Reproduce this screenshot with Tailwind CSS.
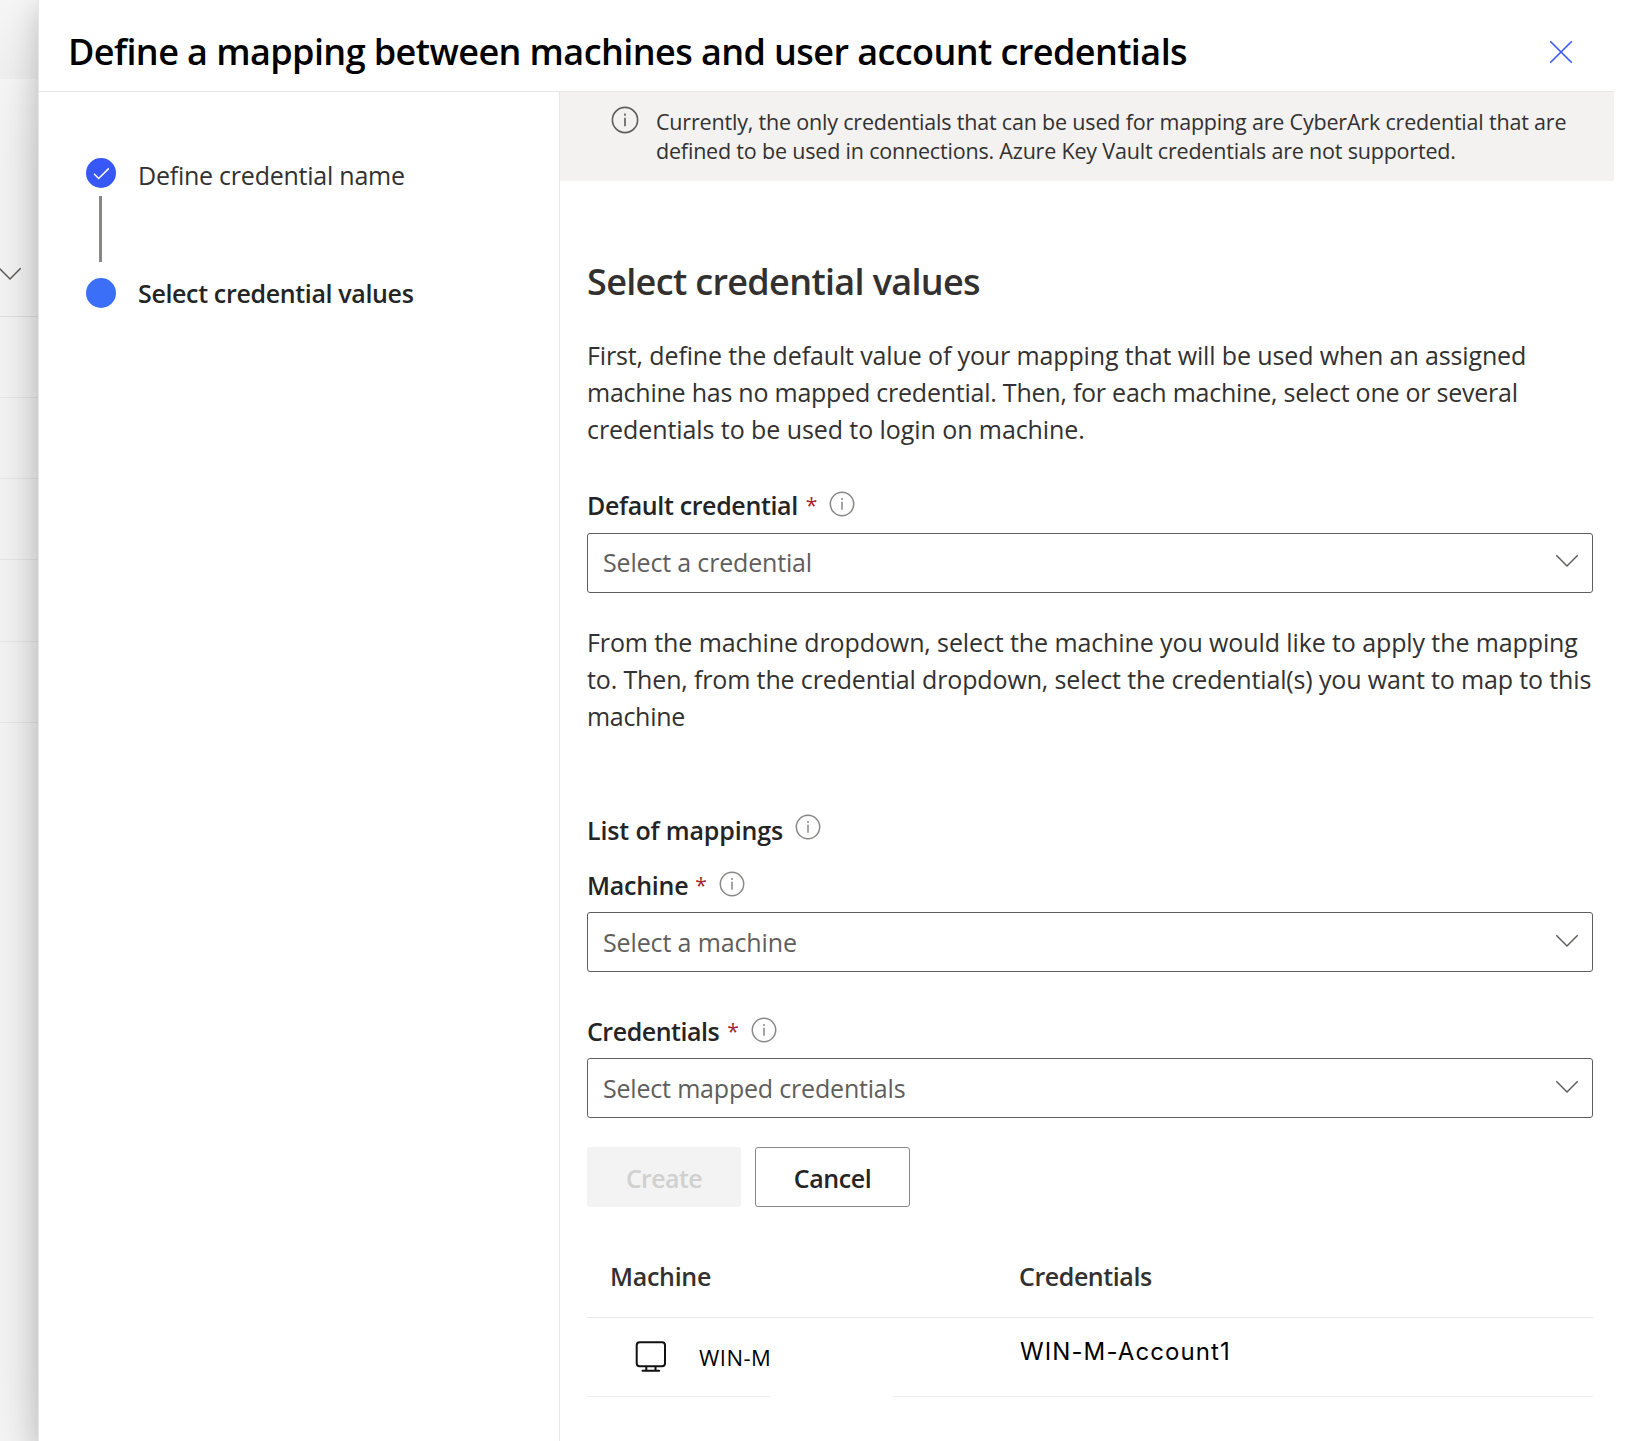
<!DOCTYPE html>
<html lang="en">
<head>
<meta charset="utf-8">
<title>Define a mapping</title>
<script src="https://cdn.jsdelivr.net/npm/@tailwindcss/browser@4"></script>
</head>
<body class="w-[1636px] h-[1441px] overflow-hidden bg-white font-['Open_Sans',sans-serif] text-[25px] leading-[37px] text-[#323130] whitespace-nowrap">
<svg class="hidden">
  <symbol id="info" viewBox="0 0 26 26"><circle cx="13" cy="13" r="11.7" fill="none" stroke="currentColor" stroke-width="1.5"/><path d="M13 10.8v8M13 7v2" stroke="currentColor" stroke-width="1.5" fill="none"/></symbol>
  <symbol id="chev" viewBox="0 0 24 14"><path d="M1.3 1.3 12 12 22.7 1.3" fill="none" stroke="currentColor" stroke-width="1.5"/></symbol>
</svg>
<div class="flex h-[1441px] overflow-hidden">
  <!-- Page behind the panel -->
  <aside class="w-[38px] shrink-0 flex flex-col bg-white">
    <div class="h-[79px] bg-[#f8f8f8]"></div>
    <div class="h-[238px] border-b border-[#ebebeb] pt-[188px]"><svg class="w-6 h-[14px] -ml-[2px] text-[#605e5c]"><use href="#chev"/></svg></div>
    <div class="h-[81px] border-b border-[#f3f2f1]"></div>
    <div class="h-[81px] border-b border-[#f3f2f1]"></div>
    <div class="h-[81px] border-b border-[#f3f2f1]"></div>
    <div class="h-[82px] border-b border-[#f3f2f1]"></div>
    <div class="h-[81px] border-b border-[#f3f2f1]"></div>
  </aside>
  <main class="relative w-[1598px] h-full shrink-0 border-l border-[#e6e6e6] bg-white flex flex-col shadow-[0_47px_107px_rgba(0,0,0,0.22),0_9px_27px_rgba(0,0,0,0.18)]">
    <header class="w-[1575px] h-[92px] shrink-0 border-b border-[#e6e6e6] flex justify-between pl-[29px] pr-[41px]">
      <h1 class="pt-[28px] text-[36px] leading-[48px] font-semibold text-black tracking-[-0.58px]">Define a mapping between machines and user account credentials</h1>
      <svg class="w-6 h-6 mt-10" viewBox="0 0 24 24"><path d="M1.2 1.2 22.8 22.8M22.8 1.2 1.2 22.8" stroke="#3757f7" stroke-width="1.6"/></svg>
    </header>
    <div class="flex grow w-[1575px]">
      <nav class="w-[521px] shrink-0 border-r border-[#e6e6e6] pl-[47px] pt-[66px]">
        <div class="flex items-start gap-[22px]">
          <div class="w-[30px] flex flex-col items-center">
            <svg class="w-[30px] h-[30px]" viewBox="0 0 30 30"><circle cx="15" cy="15" r="15" fill="#3757f7"/><path d="M8 15.8 12.7 20.5 22.8 10.4" fill="none" stroke="#fff" stroke-width="1.5"/></svg>
            <div class="w-[3px] h-[66px] mt-2 mb-4 mr-px bg-[#8a8886]"></div>
            <div class="w-[30px] h-[30px] rounded-full bg-[#3b6ff8]"></div>
          </div>
          <div class="-mt-px flex flex-col gap-[81px]">
            <span class="tracking-[-0.235px]">Define credential name</span>
            <span class="font-semibold text-[#242424] tracking-[-0.35px]">Select credential values</span>
          </div>
        </div>
      </nav>
      <section class="w-[1054px] shrink-0">
        <div class="h-[89px] bg-[#f3f2f1] flex pl-[51px] pt-[14px] text-[21.5px] leading-[29.3px]">
          <svg class="w-7 h-7 text-[#605e5c] mr-[17px]"><use href="#info"/></svg>
          <p class="pt-px tracking-[-0.19px]">Currently, the only credentials that can be used for mapping are CyberArk credential that are<br>defined to be used in connections. Azure Key Vault credentials are not supported.</p>
        </div>
        <div class="pl-[27px] w-[1033px] pt-[76px]">
          <h2 class="text-[36px] leading-[50px] font-semibold tracking-[-0.66px]">Select credential values</h2>
          <p class="mt-[30px] leading-[37.2px]"><span class="tracking-[-0.13px]">First, define the default value of your mapping that will be used when an assigned</span><br><span class="tracking-[-0.235px]">machine has no mapped credential. Then, for each machine, select one or several</span><br><span class="tracking-[-0.075px]">credentials to be used to login on machine.</span></p>
          <div class="mt-[38px] flex h-[37px] font-semibold text-[#242424]"><span class="tracking-[-0.36px]">Default credential</span><span class="ml-2 text-[21px] font-normal text-[#a4262c]">*</span><svg class="ml-3 mt-1 w-[26px] h-[26px] text-[#8a8886]"><use href="#info"/></svg></div>
          <div class="mt-[9px] h-[60px] rounded-[3px] border border-[#605e5c] flex items-center justify-between pl-[15px] pr-[13px] text-[#605e5c]"><span class="tracking-[-0.17px]">Select a credential</span><svg class="w-6 h-[14px] -mt-[3px]"><use href="#chev"/></svg></div>
          <p class="mt-[31px] leading-[37.2px]"><span class="tracking-[-0.105px]">From the machine dropdown, select the machine you would like to apply the mapping</span><br><span class="tracking-[-0.142px]">to. Then, from the credential dropdown, select the credential(s) you want to map to this</span><br><span class="tracking-[-0.3px]">machine</span></p>
          <div class="mt-[76px] flex h-[37px] font-semibold text-[#242424]"><span class="pt-px tracking-[-0.14px]">List of mappings</span><svg class="ml-[12px] mt-[3px] w-[26px] h-[26px] text-[#8a8886]"><use href="#info"/></svg></div>
          <div class="mt-[19px] flex h-[37px] font-semibold text-[#242424]"><span class="tracking-[-0.25px]">Machine</span><span class="ml-[7px] text-[21px] font-normal text-[#a4262c]">*</span><svg class="ml-3 mt-1 w-[26px] h-[26px] text-[#8a8886]"><use href="#info"/></svg></div>
          <div class="mt-[8px] h-[60px] rounded-[3px] border border-[#605e5c] flex items-center justify-between pl-[15px] pr-[13px] text-[#605e5c]"><span class="tracking-[-0.13px]">Select a machine</span><svg class="w-6 h-[14px] -mt-[3px]"><use href="#chev"/></svg></div>
          <div class="mt-[41px] flex h-[37px] font-semibold text-[#242424]"><span class="tracking-[-0.47px]">Credentials</span><span class="ml-2 text-[21px] font-normal text-[#a4262c]">*</span><svg class="ml-3 mt-1 w-[26px] h-[26px] text-[#8a8886]"><use href="#info"/></svg></div>
          <div class="mt-[8px] h-[60px] rounded-[3px] border border-[#605e5c] flex items-center justify-between pl-[15px] pr-[13px] text-[#605e5c]"><span class="tracking-[-0.19px]">Select mapped credentials</span><svg class="w-6 h-[14px] -mt-[3px]"><use href="#chev"/></svg></div>
          <div class="mt-[29px] flex gap-[14px] font-semibold">
            <button class="w-[154px] h-[60px] pt-[2px] rounded-[3px] bg-[#f3f3f3] text-[#d0d0d0] tracking-[-0.6px]">Create</button>
            <button class="w-[155px] h-[60px] pt-[2px] rounded-[3px] border border-[#8a8886] text-[#242424] tracking-[-0.45px]">Cancel</button>
          </div>
          <div class="flex h-[111px] border-b border-[#e8e8e8] pl-[23px] pt-[51px] font-semibold"><span class="w-[409px] tracking-[-0.3px]">Machine</span><span class="tracking-[-0.43px]">Credentials</span></div>
          <div class="flex h-[78px] text-black">
            <svg class="w-8 h-8 ml-12 mt-[23px]" viewBox="0 0 32 32" fill="none" stroke="#111" stroke-width="2"><rect x="1.7" y="1.3" width="28.3" height="24" rx="3"/><path d="M11.3 25.3v4.4M20.5 25.3v4.4"/><path d="M7.5 29.8h16.6" stroke-linecap="round"/></svg>
            <span class="ml-[32px] w-[321px] pt-[21px] text-[22px] tracking-[0.5px]">WIN-M</span>
            <span class="pt-[15px] font-['Inter',sans-serif] text-[24px] tracking-[1.1px]">WIN-M-Account1</span>
          </div>
          <div class="flex gap-[122px]"><div class="h-px w-[183px] bg-[#f0f0f0]"></div><div class="h-px grow bg-[#f0f0f0]"></div></div>
        </div>
      </section>
    </div>
  </main>
</div>
</body>
</html>
